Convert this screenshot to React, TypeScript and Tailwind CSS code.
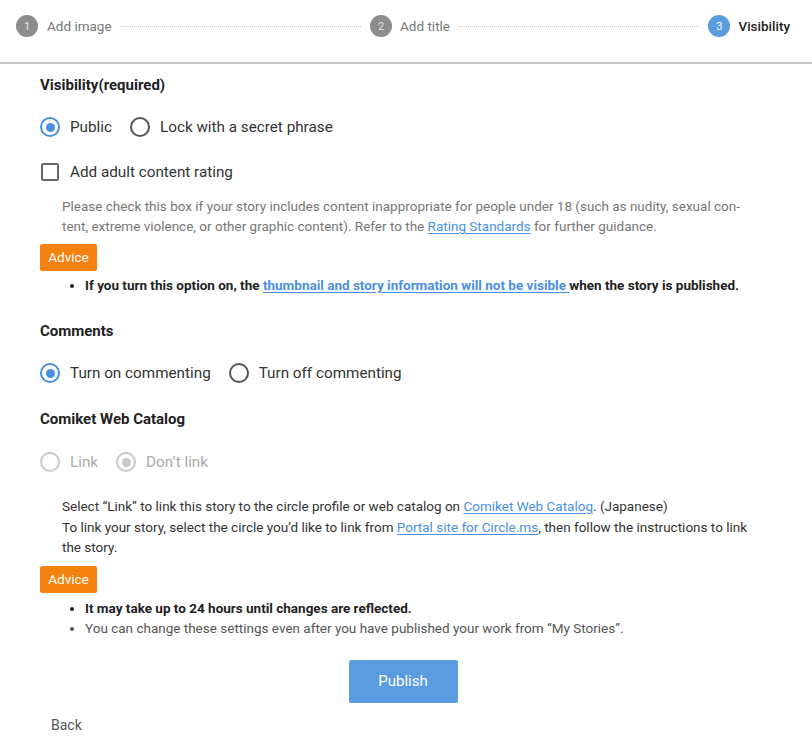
import type { ReactNode } from 'react';

const FONT = { fontFamily: 'Roboto, "Noto Sans", Arial, sans-serif' };

function StepCircle({ n, active }: { n: number; active?: boolean }) {
  return (
    <span
      className={`flex size-[22px] shrink-0 items-center justify-center rounded-full text-[11px] leading-none ${
        active ? 'bg-[#5b9be0] text-white' : 'bg-[#8c8c8c] text-[#e6e6e6]'
      }`}
    >
      {n}
    </span>
  );
}

function Radio({ checked, disabled, label }: { checked?: boolean; disabled?: boolean; label: string }) {
  const ring = disabled ? 'border-[#c9c9c9]' : checked ? 'border-[#4a90e2]' : 'border-[#555]';
  const dot = disabled ? 'bg-[#c9c9c9]' : 'bg-[#4a90e2]';
  return (
    <label className="flex items-center gap-[10px]">
      <span className={`flex size-[20px] items-center justify-center rounded-full border-2 ${ring}`}>
        {checked && <span className={`size-[9px] rounded-full ${dot}`} />}
      </span>
      <span className={`text-[15.25px] leading-6 ${disabled ? 'text-[#aaa]' : 'text-[#333]'}`}>{label}</span>
    </label>
  );
}

function A({ children }: { children: ReactNode }) {
  return <a className="text-[#4a90e2] underline underline-offset-2">{children}</a>;
}

function Advice() {
  return (
    <span className="inline-flex h-[27px] w-[57px] items-center justify-center rounded-[2px] bg-[#f5820f] text-[13.5px] text-white">
      Advice
    </span>
  );
}

export default function App() {
  return (
    <div className="min-h-screen w-[812px] bg-white" style={FONT}>
      {/* stepper */}
      <div className="h-[64px] border-b-2 border-[#c6c6c6]">
        <div className="flex h-[52px] items-center pl-[16px] pr-[22px]">
          <StepCircle n={1} />
          <span className="ml-[9px] text-[13.5px] text-[#777]">Add image</span>
          <span className="mx-[9px] flex-1 border-t border-dotted border-[#c8c8c8]" />
          <StepCircle n={2} />
          <span className="ml-[8px] text-[13.5px] text-[#777]">Add title</span>
          <span className="mx-[9px] flex-1 border-t border-dotted border-[#c8c8c8]" />
          <StepCircle n={3} active />
          <span className="ml-[8px] text-[13.5px] font-medium text-[#222]">Visibility</span>
        </div>
      </div>

      <div className="flex flex-col px-[40px]">
        <h2 className="mt-[11px] text-[15px] font-bold leading-5 text-[#222]">Visibility(required)</h2>
        <div className="mt-[20px] flex h-6 items-center gap-[18px]">
          <Radio checked label="Public" />
          <Radio label="Lock with a secret phrase" />
        </div>
        <label className="mt-[21px] flex h-6 items-center gap-[11px]">
          <span className="ml-px size-[18px] rounded-[2px] border-2 border-[#666]" />
          <span className="text-[15.25px] text-[#333]">Add adult content rating</span>
        </label>
        <p className="mt-[12px] pl-[22px] text-[13.5px] leading-5 text-[#777]">
          Please check this box if your story includes content inappropriate for people under 18 (such as nudity, sexual con-
          <br />
          tent, extreme violence, or other graphic content). Refer to the <A>Rating Standards</A> for further guidance.
        </p>
        <div className="mt-[8px]">
          <Advice />
        </div>
        <ul className="mt-[4px] list-disc pl-[45px] text-[13.5px] font-bold leading-5 text-[#222]">
          <li className="whitespace-nowrap">
            If you turn this option on, the <A>thumbnail and story information will not be visible </A>when the story is
            published.
          </li>
        </ul>

        <h2 className="mt-[26px] text-[15px] font-bold leading-5 text-[#222]">Comments</h2>
        <div className="mt-[20px] flex h-6 items-center gap-[18px]">
          <Radio checked label="Turn on commenting" />
          <Radio label="Turn off commenting" />
        </div>

        <h2 className="mt-[24px] text-[15px] font-bold leading-5 text-[#222]">Comiket Web Catalog</h2>
        <div className="mt-[21px] flex h-6 items-center gap-[18px]">
          <Radio disabled label="Link" />
          <Radio disabled checked label="Don’t link" />
        </div>
        <p className="mt-[22px] whitespace-nowrap pl-[22px] text-[13.5px] leading-[20.5px] text-[#333]">
          Select “Link” to link this story to the circle profile or web catalog on <A>Comiket Web Catalog</A>. (Japanese)
          <br />
          To link your story, select the circle you’d like to link from <A>Portal site for Circle.ms</A>, then follow the
          instructions to link
          <br />
          the story.
        </p>
        <div className="mt-[8px]">
          <Advice />
        </div>
        <ul className="mt-[5px] list-disc pl-[45px] text-[13.5px] leading-5">
          <li className="font-bold text-[#222]">It may take up to 24 hours until changes are reflected.</li>
          <li className="text-[#555]">You can change these settings even after you have published your work from “My Stories”.</li>
        </ul>

        <div className="mt-[22px] flex justify-center">
          <button
            type="button"
            className="ml-[-6px] h-[43px] w-[109px] rounded-[2px] bg-[#5b9be0] text-[15px] text-white"
          >
            Publish
          </button>
        </div>
        <button type="button" className="mt-[12px] self-start pl-[11px] text-[14px] leading-5 text-[#555]">
          Back
        </button>
      </div>
    </div>
  );
}
